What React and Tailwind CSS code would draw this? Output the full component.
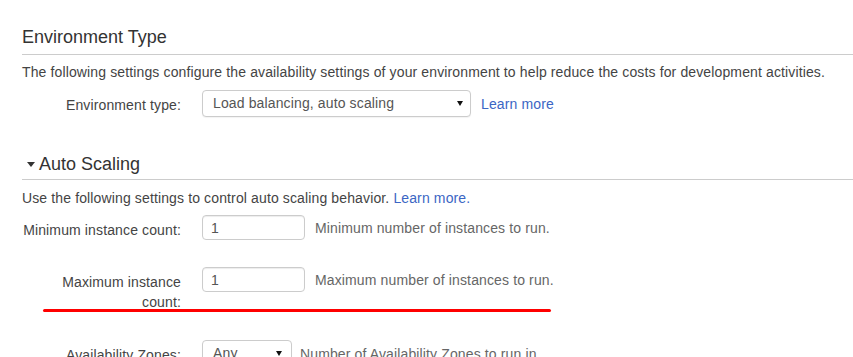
import React from 'react';

const Caret = ({ className = '' }) => (
  <svg width="6" height="5" viewBox="0 0 6 5" className={className}>
    <polygon points="0,0 6,0 3,5" fill="#111" />
  </svg>
);

const Label = ({ children }) => (
  <div className="w-[159px] mr-[21px] pt-[5px] text-right text-[14px] leading-[20px] tracking-[0.13px] text-[#444] shrink-0">
    {children}
  </div>
);

const TextInput = ({ value }) => (
  <input
    readOnly
    value={value}
    className="w-[103px] h-[25px] px-[8px] text-[14px] text-[#555] bg-white border border-[#ccc] rounded-[4px] shadow-[inset_0_1px_1px_rgba(0,0,0,0.075)] outline-none"
  />
);

const FakeSelect = ({ value, width, padRight }) => (
  <div
    className={`${width} h-[27px] flex items-center justify-between pl-[10px] ${padRight} text-[14px] tracking-[0.13px] text-[#555] bg-white border border-[#ccc] rounded-[4px] shadow-[0_1px_1px_rgba(0,0,0,0.05)] shrink-0`}
  >
    <span>{value}</span>
    <Caret />
  </div>
);

export default function App() {
  return (
    <div className="relative w-[853px] h-[357px] overflow-hidden bg-white font-['Liberation_Sans',Arial,sans-serif]">
      <div className="pl-[22px] pt-[27px]">
        {/* Environment Type */}
        <h2 className="text-[18px] leading-[20px] text-[#333] pb-[7px] border-b border-[#ccc]">
          Environment Type
        </h2>
        <p className="mt-[7px] text-[14px] leading-[20px] tracking-[0.13px] text-[#444]">
          The following settings configure the availability settings of your environment to help reduce the costs for development activities.
        </p>
        <div className="mt-[8px] flex items-start">
          <Label>Environment type:</Label>
          <div className="flex items-center">
            <FakeSelect value="Load balancing, auto scaling" width="w-[269px]" padRight="pr-[7px]" />
            <a className="ml-[10px] text-[14px] leading-[20px] tracking-[0.13px] text-[#3b66c4]">Learn more</a>
          </div>
        </div>

        {/* Auto Scaling */}
        <h2 className="mt-[37px] flex items-center pl-[5px] text-[18px] leading-[20px] text-[#333] pb-[5px] border-b border-[#ccc]">
          <svg width="8" height="5" viewBox="0 0 8 5" className="mr-[4px] mt-[1px]">
            <polygon points="0,0 8,0 4,5" fill="#333" />
          </svg>
          Auto Scaling
        </h2>
        <p className="mt-[8px] text-[14px] leading-[20px] tracking-[0.13px] text-[#444]">
          Use the following settings to control auto scaling behavior.{' '}
          <a className="text-[#3b66c4]">Learn more.</a>
        </p>

        <div className="mt-[7px] flex items-start">
          <Label>Minimum instance count:</Label>
          <div className="flex items-center">
            <TextInput value="1" />
            <span className="ml-[10px] text-[14px] leading-[20px] tracking-[0.13px] text-[#666]">
              Minimum number of instances to run.
            </span>
          </div>
        </div>

        <div className="mt-[27px] flex items-start">
          <Label>Maximum instance count:</Label>
          <div className="flex items-center">
            <TextInput value="1" />
            <span className="ml-[10px] text-[14px] leading-[20px] tracking-[0.13px] text-[#666]">
              Maximum number of instances to run.
            </span>
          </div>
        </div>

        <div className="mt-[28px] flex items-start">
          <Label>Availability Zones:</Label>
          <div className="flex items-center">
            <FakeSelect value="Any" width="w-[90px]" padRight="pr-[9px]" />
            <span className="ml-[8px] text-[14px] leading-[20px] tracking-[0.13px] text-[#666]">
              Number of Availability Zones to run in.
            </span>
          </div>
        </div>
      </div>

      {/* red annotation underline */}
      <div className="absolute left-[43px] top-[309px] w-[508px] h-[3px] rounded-full bg-[#f00]" />
    </div>
  );
}
